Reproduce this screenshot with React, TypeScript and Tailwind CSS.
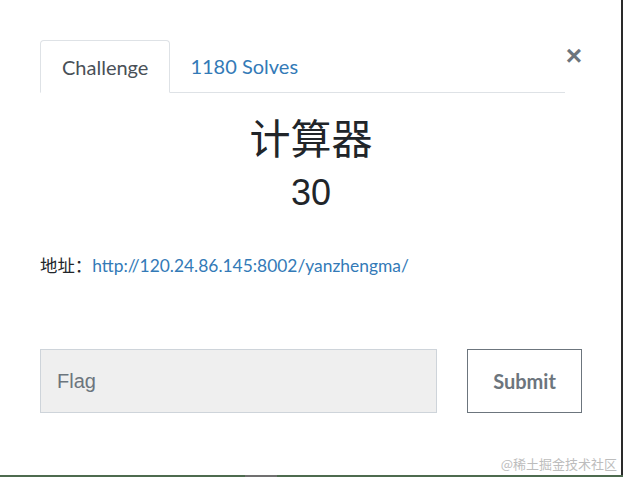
import React from "react";

export default function App() {
  return (
    <div className="relative w-[623px] h-[477px] bg-white overflow-hidden" style={{ fontFamily: "Lato, 'Noto Sans CJK SC', sans-serif" }}>
      <div className="absolute right-0 top-0 bottom-0 w-[2px] bg-[#2a2a2a]" />
      <div className="absolute left-0 right-0 bottom-0 h-[2px] bg-[#4d6b4f]">
        <div className="absolute left-[245px] w-[32px] h-[2px] bg-[#707070]" />
      </div>
      <div className="pt-[40px] pl-[40px] pr-[41px]">
        <div className="flex items-start">
          <div className="flex-1 flex border-b border-[#dee2e6] w-[525px]">
            <div className="h-[53px] -mb-px px-[21px] flex items-center border border-[#dee2e6] border-b-white rounded-t-[4px] bg-white text-[20px] text-[#495057]">
              Challenge
            </div>
            <div className="h-[52px] px-[20px] flex items-center text-[20px] text-[#337ab7]">
              1180 Solves
            </div>
          </div>
          <div className="w-[16px] ml-[1px] mt-[2px] text-[#6c757d] text-[28px] font-bold leading-none flex items-center justify-center" style={{ fontFamily: "'Liberation Sans', Arial, sans-serif" }}>
            ×
          </div>
        </div>
        <div className="w-[542px] text-center text-[#212529]">
          <div className="mt-[16px] text-[41px] leading-[54px]" style={{ fontFamily: "'Noto Sans CJK SC', sans-serif" }}>计算器</div>
          <div className="mt-[8px] text-[36px] leading-[44px]" style={{ fontFamily: "'Liberation Sans', Arial, sans-serif" }}>30</div>
        </div>
        <div className="mt-[37px] text-[17.4px] text-[#212529] leading-[26px]">
          <span style={{ fontFamily: "'Noto Sans CJK SC', sans-serif" }}>地址：</span>
          <span className="text-[#337ab7]">http://120.24.86.145:8002/yanzhengma/</span>
        </div>
        <div className="mt-[70px] flex">
          <div className="w-[397px] h-[64px] bg-[#efefef] border border-[#ced4da] flex items-center pl-[16px] text-[20px] text-[#6c757d]" style={{ fontFamily: "'Liberation Sans', Arial, sans-serif" }}>
            Flag
          </div>
          <div className="ml-[30px] w-[115px] h-[64px] border border-[#6c757d] flex items-center justify-center text-[20px] font-bold text-[#6c757d]">
            Submit
          </div>
        </div>
      </div>
      <div className="absolute right-[6px] bottom-[4px] text-[13px] text-[#bdbdbd]" style={{ fontFamily: "'Noto Sans CJK SC', sans-serif" }}>
        @稀土掘金技术社区
      </div>
    </div>
  );
}
